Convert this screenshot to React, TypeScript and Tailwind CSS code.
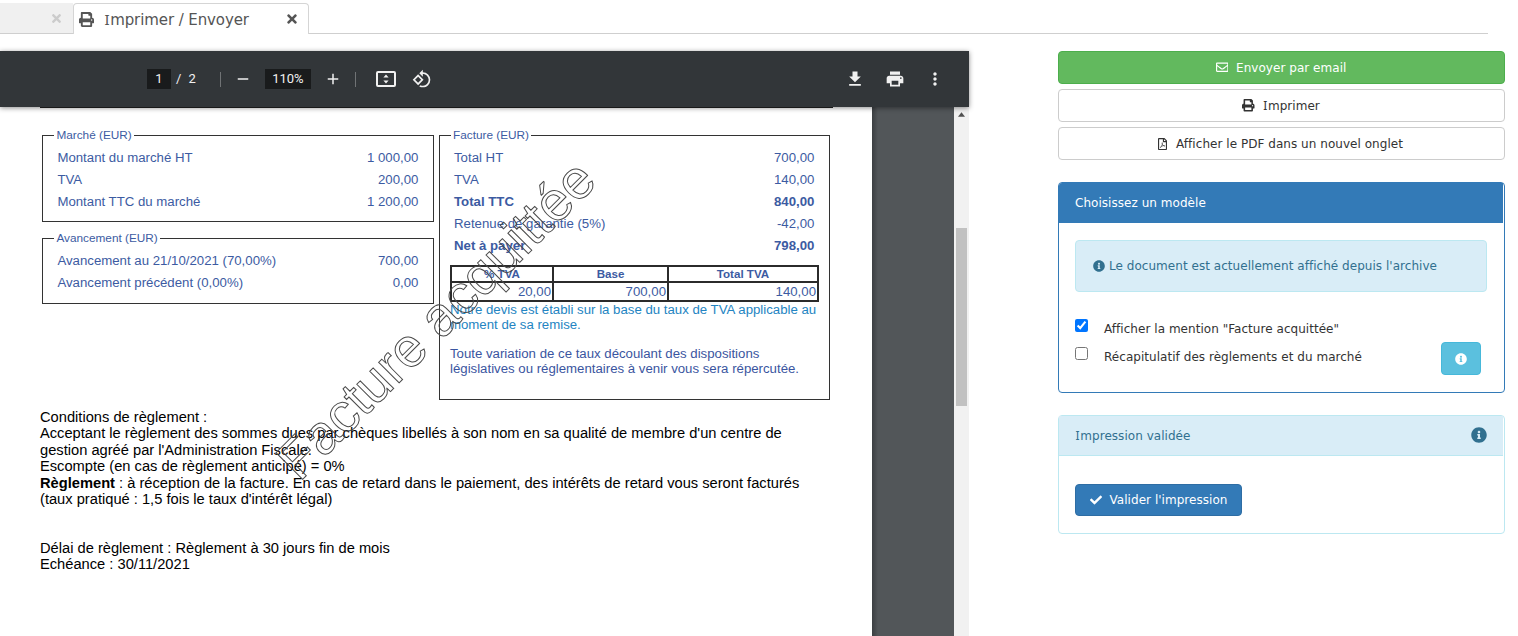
import type { ReactNode } from "react";
import { FaCheck, FaInfoCircle, FaPrint, FaRegEnvelope, FaRegFilePdf, FaTimes } from "react-icons/fa";
import { MdAdd, MdFileDownload, MdMoreVert, MdPrint, MdRemove, MdRotate90DegreesCcw } from "react-icons/md";

function SerifI() {
  return <span className="mx-[0.6px] font-['Noto_Sans'] leading-none">I</span>;
}

function Tabs() {
  return (
    <header className="flex h-[34px] w-[1488px] items-end border-b border-[#cfcfcf] pt-[3px] text-[15px] text-[#555]">
      <div className="flex h-[30px] w-[73px] items-center justify-end bg-[#f0f0f0] pr-[10px] text-[#ccc]">
        <FaTimes className="size-[13px]" />
      </div>
      <div className="relative top-px flex h-[31px] w-[236px] items-center rounded-t border border-b-0 border-[#d5d5d5] bg-white pl-[5px]">
        <FaPrint className="size-[15px]" />
        <span className="ml-[10px] whitespace-nowrap pt-[2px] leading-none tracking-[-0.1px]"><SerifI />mprimer / Envoyer</span>
        <FaTimes className="ml-auto mr-[9px] size-[14px]" />
      </div>
    </header>
  );
}

function FitPageIcon() {
  return (
    <svg viewBox="0 0 20 16" className="h-4 w-5" fill="none">
      <rect x="1" y="1" width="18" height="14" rx="1" stroke="currentColor" strokeWidth="2" />
      <path d="M10 3.4 12.6 6.6H7.4zM10 12.6 7.4 9.4h5.2z" fill="currentColor" />
    </svg>
  );
}

function ViewerToolbar() {
  return (
    <div className="relative z-10 flex h-14 items-center bg-[#323639] pl-[147px] pr-6 font-['Roboto'] text-[13px] text-[#f1f1f1] shadow-[0_1px_5px_rgba(0,0,0,0.45)]">
      <span className="flex h-5 w-6 items-center justify-center bg-[#191b1c]">1</span>
      <span className="ml-[5px]">/</span>
      <span className="ml-[7px] w-[9px]">2</span>
      <span className="ml-[23px] h-[15px] w-px bg-[#707375]" />
      <MdRemove className="ml-[13px] size-[18px]" />
      <span className="ml-[13px] flex h-5 w-[46px] items-center justify-center bg-[#191b1c] pr-px">110%</span>
      <MdAdd className="ml-[13px] size-[18px]" />
      <span className="ml-[13px] h-[15px] w-px bg-[#707375]" />
      <span className="ml-5"><FitPageIcon /></span>
      <MdRotate90DegreesCcw className="ml-4 size-5" />
      <MdFileDownload className="ml-auto size-5" />
      <MdPrint className="ml-5 size-5" />
      <MdMoreVert className="ml-5 size-5" />
    </div>
  );
}

function Line({ label, value, bold }: { label: string; value: string; bold?: boolean }) {
  return (
    <div className={bold ? "flex h-[22px] items-center justify-between font-bold" : "flex h-[22px] items-center justify-between"}>
      <span>{label}</span>
      <span>{value}</span>
    </div>
  );
}

function Box({ title, className, children }: { title: string; className: string; children: ReactNode }) {
  return (
    <fieldset className={`border border-[#333] pr-[14.6px] ${className}`}>
      <legend className="-ml-[3px] px-[2px] text-[11.8px] leading-4">{title}</legend>
      <div className="pt-1">{children}</div>
    </fieldset>
  );
}

function Invoice() {
  return (
    <div className="relative h-full w-[872px] shrink-0 overflow-hidden bg-white pt-5 font-['Liberation_Sans']">
      <div className="absolute left-10 top-0 h-px w-[793px] bg-[#222]" />
      <div className="flex gap-[5px] whitespace-nowrap pl-[42px] text-[13.23px] text-[#3c5ba2]">
        <div>
          <Box title="Marché (EUR)" className="h-[95px] w-[392px] pl-[14.4px]">
            <Line label="Montant du marché HT" value="1 000,00" />
            <Line label="TVA" value="200,00" />
            <Line label="Montant TTC du marché" value="1 200,00" />
          </Box>
          <Box title="Avancement (EUR)" className="mt-2 h-[74px] w-[392px] pl-[14.4px]">
            <Line label="Avancement au 21/10/2021 (70,00%)" value="700,00" />
            <Line label="Avancement précédent (0,00%)" value="0,00" />
          </Box>
        </div>
        <Box title="Facture (EUR)" className="h-[273px] w-[391px] pl-[14px]">
          <Line label="Total HT" value="700,00" />
          <Line label="TVA" value="140,00" />
          <Line label="Total TTC" value="840,00" bold />
          <Line label="Retenue de garantie (5%)" value="-42,00" />
          <Line label="Net à payer" value="798,00" bold />
          <div className="-ml-1 -mr-[5px] mt-2 grid w-[369px] grid-cols-[100px_113px_148px] gap-[2px] border-2 border-[#2b2b2b] bg-[#2b2b2b]">
            {["% TVA", "Base", "Total TVA"].map((t) => (
              <div key={t} className="h-[14px] bg-white text-center text-[11.6px] font-bold leading-[14px]">{t}</div>
            ))}
            {["20,00", "700,00", "140,00"].map((t) => (
              <div key={t} className="h-[17px] bg-white pr-px text-right leading-[18px]">{t}</div>
            ))}
          </div>
          <div className="-mx-1 leading-[15px]">
            <p className="text-[#2384c2]">Notre devis est établi sur la base du taux de TVA applicable au<br />moment de sa remise.</p>
            <p className="mt-[14px] text-[#3a55a0]">Toute variation de ce taux découlant des dispositions<br />législatives ou réglementaires à venir vous sera répercutée.</p>
          </div>
        </Box>
      </div>
      <div className="mt-[9px] whitespace-nowrap pl-10 text-[14.68px] leading-[16.4px] text-black">
        <p>Conditions de règlement :</p>
        <p>Acceptant le règlement des sommes dues par chèques libellés à son nom en sa qualité de membre d'un centre de<br />gestion agréé par l'Administration Fiscale.</p>
        <p>Escompte (en cas de règlement anticipé) = 0%</p>
        <p><b>Règlement</b> : à réception de la facture. En cas de retard dans le paiement, des intérêts de retard vous seront facturés<br />(taux pratiqué : 1,5 fois le taux d'intérêt légal)</p>
        <p className="mt-[32.4px]">Délai de règlement : Règlement à 30 jours fin de mois</p>
        <p>Echéance : 30/11/2021</p>
      </div>
      <svg className="pointer-events-none absolute left-0 top-0" width="872" height="529">
        <text transform="translate(299.5 375.5) rotate(-45)" fontSize="54.8" fontFamily="Liberation Sans" fill="none" stroke="#4a4a4a" strokeWidth="1">Facture acquittée</text>
      </svg>
    </div>
  );
}

function Viewer() {
  return (
    <section className="mt-[17px] flex h-[585px] w-[969px] flex-col">
      <ViewerToolbar />
      <div className="flex h-[529px] bg-[#525659]">
        <Invoice />
        <div className="w-[82px] bg-[linear-gradient(to_right,#3c3f42,#525659_6px)]" />
        <div className="flex w-[15px] flex-col items-center bg-[#f1f1f1] pt-[5px]">
          <svg viewBox="0 0 8 5" className="h-[5px] w-[7px]"><path d="M4 0 8 5H0z" fill="#505050" /></svg>
          <div className="mt-[111px] h-[178px] w-[11px] bg-[#c1c1c1]" />
        </div>
      </div>
    </section>
  );
}

function ActionButton({ icon, children, primary }: { icon: ReactNode; children: ReactNode; primary?: boolean }) {
  return (
    <button
      className={
        primary
          ? "flex h-[33px] items-center justify-center gap-2 rounded border border-[#4cae4c] bg-[#62b95e] pr-px text-white"
          : "flex h-[33px] items-center justify-center gap-2 rounded border border-[#ccc] bg-white pr-px text-[#333]"
      }
    >
      {icon}
      <span className="pt-[2px]">{children}</span>
    </button>
  );
}

function Sidebar() {
  return (
    <aside className="ml-[89px] mt-[17px] w-[447px] text-[12px] leading-[17px] tracking-[0.04px] text-[#333]">
      <div className="flex flex-col gap-[5px]">
        <ActionButton primary icon={<FaRegEnvelope className="size-[12.5px]" />}>Envoyer par email</ActionButton>
        <ActionButton icon={<FaPrint className="size-[12.5px]" />}><SerifI />mprimer</ActionButton>
        <ActionButton icon={<FaRegFilePdf className="-ml-[2px] -mr-[2px] h-3 w-[13px]" />}><span className="pl-px pr-px">Afficher le PDF dans un nouvel onglet</span></ActionButton>
      </div>

      <section className="mt-[22px] h-[211px] rounded border border-[#337ab7] bg-white">
        <h2 className="mr-px flex h-10 items-center rounded-tl-[3px] bg-[#337ab7] pl-4 text-white">Choisissez un modèle</h2>
        <div className="ml-4 mr-[17px] mt-[17px] flex h-[52px] items-center gap-1 rounded border border-[#bce8f1] bg-[#d9edf7] pl-[17px] text-[#31708f]">
          <FaInfoCircle className="size-3" />
          <span>Le document est actuellement affiché depuis l'archive</span>
        </div>
        <label className="ml-4 mt-[27px] flex">
          <input type="checkbox" defaultChecked className="size-[13px]" />
          <span className="ml-4 pt-[2px]">Afficher la mention "Facture acquittée"</span>
        </label>
        <div className="ml-4 mr-[23px] mt-1 flex h-[33px] items-start">
          <label className="mt-[5px] flex">
            <input type="checkbox" className="size-[13px]" />
            <span className="ml-4 pt-[2px]">Récapitulatif des règlements et du marché</span>
          </label>
          <button className="ml-auto flex h-[33px] w-10 items-center justify-center rounded border border-[#46b8da] bg-[#5bc0de] text-white">
            <FaInfoCircle className="size-3" />
          </button>
        </div>
      </section>

      <section className="mt-[22px] h-[119px] rounded border border-[#bce8f1] bg-white">
        <div className="mr-px flex h-10 items-center justify-between border-b border-[#bce8f1] bg-[#d9edf7] pl-4 pr-4 text-[#31708f]">
          <span className="pt-[2px]"><SerifI />mpression validée</span>
          <FaInfoCircle className="mb-px size-4" />
        </div>
        <button className="ml-4 mt-7 flex h-8 w-[167px] items-center justify-center gap-2 rounded border border-[#2e6da4] bg-[#337ab7] text-white">
          <FaCheck className="size-3" />
          <span>Valider l'impression</span>
        </button>
      </section>
    </aside>
  );
}

export default function App() {
  return (
    <div className="h-[636px] w-[1518px] overflow-hidden bg-white font-['DejaVu_Sans',sans-serif]">
      <Tabs />
      <main className="flex items-start">
        <Viewer />
        <Sidebar />
      </main>
    </div>
  );
}
